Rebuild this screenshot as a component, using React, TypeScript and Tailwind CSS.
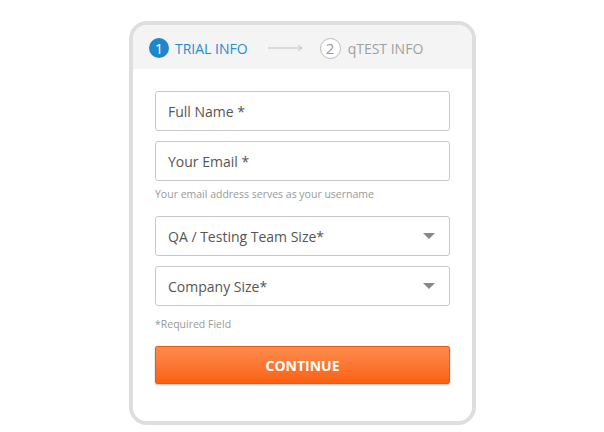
import React from 'react';

function Field({ label, select }: { label: string; select?: boolean }) {
  return (
    <div className="h-10 w-full rounded-[3px] border border-[#c8c8c8] bg-white flex items-center px-3 justify-between">
      <span className="text-[14px] text-[#555]">{label}</span>
      {select && (
        <span className="mr-[2px] w-0 h-0 border-l-[6px] border-r-[6px] border-t-[6px] border-l-transparent border-r-transparent border-t-[#888]" />
      )}
    </div>
  );
}

export default function App() {
  return (
    <div className="w-[604px] h-[432px] bg-white flex justify-center pt-[21px] font-['Open_Sans',sans-serif]">
      <div className="w-[347px] h-[404px] rounded-[18px] border-4 border-[#dedede] overflow-hidden flex flex-col ml-[1px]">
        {/* Steps */}
        <div className="h-[44px] bg-[#f4f4f4] flex items-center pl-[16px] pt-[2px]">
          <span className="w-5 h-5 rounded-full bg-[#1d86cd] text-white text-[15px] leading-none flex items-center justify-center">1</span>
          <span className="ml-[6px] text-[14px] text-[#2a8bcf]">TRIAL INFO</span>
          <svg className="ml-[20px]" width="36" height="8" viewBox="0 0 36 8">
            <path d="M0 4h34M30 1l4 3-4 3" fill="none" stroke="#c4c4c4" strokeWidth="1" />
          </svg>
          <span className="ml-[16px] w-[21px] h-[21px] rounded-full border border-[#bbb] bg-white text-[#999] text-[15px] leading-none flex items-center justify-center">2</span>
          <span className="ml-[7px] text-[14px] text-[#a0a0a0]">qTEST INFO</span>
        </div>

        {/* Form */}
        <div className="flex-1 bg-white px-[22px] pt-[22px] flex flex-col">
          <Field label="Full Name *" />
          <div className="mt-[10px]">
            <Field label="Your Email *" />
          </div>
          <p className="mt-[6px] text-[10.5px] text-[#999] leading-[14px]">Your email address serves as your username</p>
          <div className="mt-[15px]">
            <Field label="QA / Testing Team Size*" select />
          </div>
          <div className="mt-[10px]">
            <Field label="Company Size*" select />
          </div>
          <p className="mt-[11px] text-[10.5px] text-[#999] leading-[14px]">*Required Field</p>
          <button className="mt-[15px] h-[38px] w-full rounded-[2px] border border-[#e0600f] bg-gradient-to-b from-[#fd8b4c] to-[#f9610c] text-white text-[14px] font-bold shadow-[0_1px_2px_rgba(0,0,0,0.25)]">
            CONTINUE
          </button>
        </div>
      </div>
    </div>
  );
}
